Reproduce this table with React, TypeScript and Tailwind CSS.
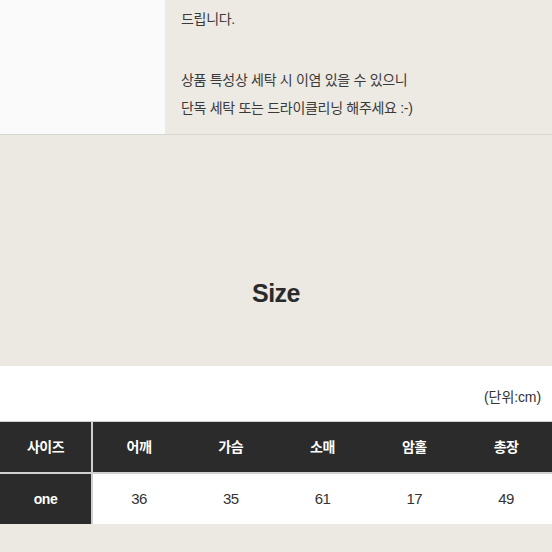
import React from 'react'

const heads = ['어깨', '가슴', '소매', '암홀', '총장']
const values = ['36', '35', '61', '17', '49']

const App = () => {
  return (
    <div
      className="w-[552px] h-[552px] overflow-hidden bg-[#ece8e2] text-[#333]"
      style={{ fontFamily: '"Liberation Sans", "Noto Sans CJK KR", sans-serif' }}
    >
      {/* 상단 안내 문구 */}
      <div className="flex h-[135px] border-b border-[#d9d6d0]">
        <div className="w-[165px] bg-[#fafafa]" />
        <div className="flex-1 bg-[#ede9e3] pl-[16px] pt-[5px] text-[14px] tracking-[-0.3px] text-[#3a3a3a]">
          <p className="leading-[28px]">드립니다.</p>
          <p className="mt-[33px] leading-[28px]">상품 특성상 세탁 시 이염 있을 수 있으니</p>
          <p className="leading-[28px]">단독 세탁 또는 드라이클리닝 해주세요 :-)</p>
        </div>
      </div>

      {/* Size 타이틀 */}
      <div className="h-[231px] pt-[143px] text-center">
        <h2 className="text-[25px] leading-[30px] font-bold text-[#2a2a2a] tracking-[-0.5px]">Size</h2>
      </div>

      {/* 사이즈표 */}
      <div className="h-[158px] bg-white pt-[21px]">
        <p className="text-right pr-[11px] text-[14px] leading-[20px] tracking-[-0.1px]">(단위:cm)</p>
        <div className="mt-[14px] border-t border-[#d0d0d0] bg-[#d0d0d0]">
          <div className="flex h-[50px]">
            <div className="w-[91px] bg-[#2b2b2b] flex items-center justify-center text-white text-[14px] font-bold tracking-[-0.5px]">
              사이즈
            </div>
            <div className="w-[2px]" />
            <div className="flex-1 flex bg-[#2b2b2b]">
              {heads.map((h) => (
                <div key={h} className="flex-1 flex items-center justify-center text-white text-[14px] font-bold tracking-[-0.5px]">
                  {h}
                </div>
              ))}
            </div>
          </div>
          <div className="flex h-[50px] mt-[2px]">
            <div className="w-[91px] bg-[#2b2b2b] flex items-center justify-center text-white text-[14px] font-bold tracking-[-0.5px]">
              one
            </div>
            <div className="w-[2px]" />
            <div className="flex-1 flex bg-white">
              {values.map((v, i) => (
                <div key={i} className="flex-1 flex items-center justify-center text-[15px] text-[#333] tracking-[-0.6px]">
                  {v}
                </div>
              ))}
            </div>
          </div>
        </div>
      </div>
    </div>
  )
}

export default App
